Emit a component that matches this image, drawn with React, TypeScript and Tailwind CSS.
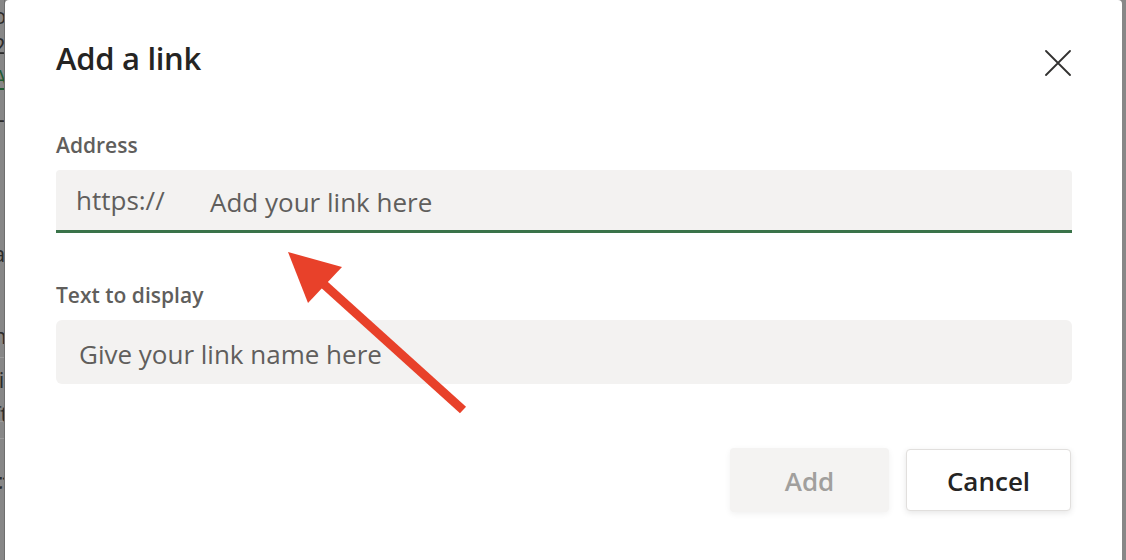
import React from 'react'

const font = { fontFamily: '"Open Sans", "Noto Sans", Arial, sans-serif' }

function PageEdge() {
  // what's left visible of the page behind the dialog
  return (
    <div className="w-[5px] shrink-0 overflow-hidden bg-[#878787] border-r border-[#6f6f6f] text-[22px] leading-[30px] text-[#2b2b2b]">
      <div className="whitespace-nowrap -ml-[7px]">
        <div className="h-[30px]">or</div>
        <div className="h-[32px]">22</div>
        <div className="h-[36px] text-[#1f5c33] underline">AA</div>
        <div className="h-[140px]">LL</div>
        <div className="h-[82px]">ar</div>
        <div className="h-[38px] border-b border-[#9a9a9a]">nn</div>
        <div className="h-[34px] mt-[6px]">.i</div>
        <div className="h-[24px] border-b border-[#9a9a9a]">ft</div>
        <div className="h-[17px] border-b border-[#9a9a9a]" />
        <div className="h-[60px] pt-[26px] font-bold">tt</div>
      </div>
    </div>
  )
}

function CloseIcon() {
  return (
    <svg width="26" height="26" viewBox="0 0 26 26" className="mt-[13px] mr-[1px]">
      <path d="M1 1 L25 25 M25 1 L1 25" stroke="#323130" strokeWidth="1.8" strokeLinecap="round" />
    </svg>
  )
}

function Arrow() {
  return (
    <svg
      className="absolute left-0 top-0 pointer-events-none"
      width="1126"
      height="560"
      viewBox="0 0 1126 560"
    >
      <line x1="463" y1="410" x2="318" y2="279" stroke="#e8412a" strokeWidth="9" />
      <polygon points="288,252 342,267 308,303" fill="#e8412a" />
    </svg>
  )
}

export default function App() {
  return (
    <div className="relative w-[1126px] h-[560px] flex bg-[#878787] overflow-hidden" style={font}>
      <PageEdge />
      <div className="flex-1 bg-white rounded-t-[4px] pl-[51px] pr-[50px] pt-[37px]">
        <div className="flex justify-between items-start">
          <h2 className="text-[31px] leading-[42px] font-semibold text-[#252423] tracking-[-0.3px]">Add a link</h2>
          <CloseIcon />
        </div>

        <div className="mt-[52px] text-[21px] leading-[28px] font-semibold text-[#605e5c]">Address</div>
        <div className="mt-[11px] h-[63px] flex items-center pt-[4px] bg-[#f3f2f1] rounded-t-[4px] border-b-[3px] border-[#3a7349] text-[26px] text-[#605e5c]">
          <span className="pl-[20px] w-[154px] -mt-[4px]">https://</span>
          <span>Add your link here</span>
        </div>

        <div className="mt-[48px] text-[21px] leading-[28px] font-semibold text-[#605e5c]">Text to display</div>
        <div className="mt-[11px] h-[64px] flex items-center pl-[23px] pt-[5px] bg-[#f3f2f1] rounded-[6px] text-[26px] text-[#605e5c]">
          Give your link name here
        </div>

        <div className="mt-[64px] flex justify-end gap-[17px] pr-[1px]">
          <button className="w-[159px] h-[64px] pt-[3px] rounded-[4px] bg-[#f4f3f2] text-[26px] font-semibold text-[#a19f9d] shadow-[0_2px_6px_rgba(0,0,0,0.06)]">
            Add
          </button>
          <button className="w-[165px] h-[62px] mt-[1px] pt-[3px] rounded-[4px] bg-white border border-[#e1dfdd] text-[26px] font-semibold text-[#252423] shadow-[0_2px_6px_rgba(0,0,0,0.1)]">
            Cancel
          </button>
        </div>
      </div>
      <div className="w-[4px] shrink-0 bg-[#878787]" />
      <Arrow />
    </div>
  )
}
